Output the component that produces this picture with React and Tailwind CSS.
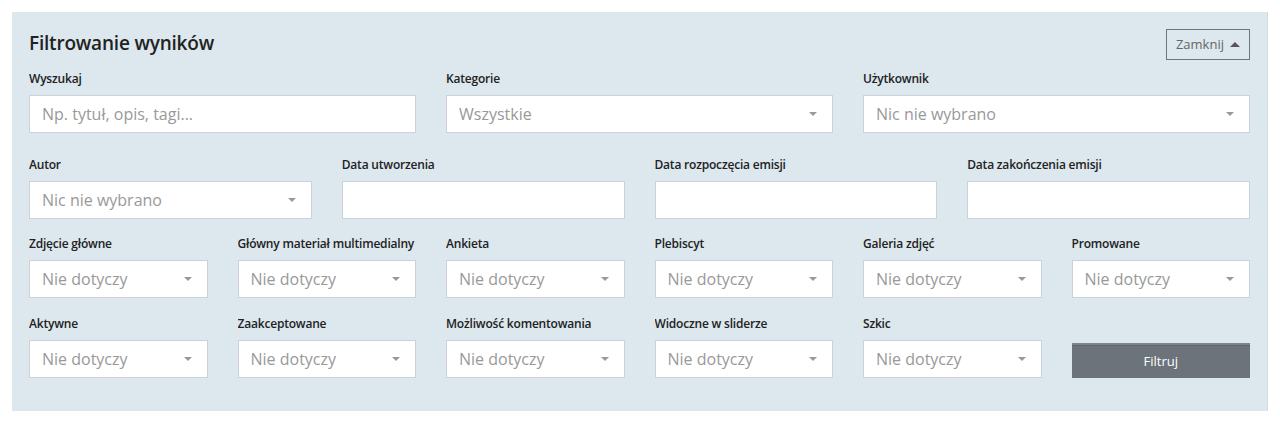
import React from 'react';

const Caret = () => (
  <span className="ml-2 h-0 w-0 shrink-0 border-x-[4px] border-t-[4px] border-x-transparent border-t-[#999]" />
);

const Field = ({ label, children }) => (
  <div className="flex min-w-0 flex-col">
    <label className="mb-[8px] truncate text-[12px] font-semibold leading-[16px] tracking-[-0.2px] text-[#222]">
      {label}
    </label>
    {children}
  </div>
);

const TextInput = ({ placeholder = '' }) => (
  <input
    type="text"
    placeholder={placeholder}
    className="h-[38px] w-full border border-[#ccd2d7] bg-white px-[12px] text-[16px] text-[#555] outline-none placeholder:text-[#999]"
  />
);

const Select = ({ value }) => (
  <button
    type="button"
    className="flex h-[38px] w-full items-center justify-between border border-[#ccd2d7] bg-white pl-[12px] pr-[15px] text-left text-[16px] text-[#999]"
  >
    <span className="truncate">{value}</span>
    <Caret />
  </button>
);

const row3 = ['Zdjęcie główne', 'Główny materiał multimedialny', 'Ankieta', 'Plebiscyt', 'Galeria zdjęć', 'Promowane'];
const row4 = ['Aktywne', 'Zaakceptowane', 'Możliwość komentowania', 'Widoczne w sliderze', 'Szkic'];

export default function App() {
  return (
    <div className="min-h-[424px] bg-white p-[12px] font-['Open_Sans',sans-serif]">
      <section className="border-r border-[#d0dbe2] bg-[#dce7ee] px-[17px] pb-[33px] pt-[17px]">
        <div className="flex items-start justify-between">
          <h2 className="pt-[1px] text-[19px] font-semibold leading-[26px] tracking-[-0.2px] text-[#222]">Filtrowanie wyników</h2>
          <button
            type="button"
            className="flex h-[31px] items-center gap-[6px] border border-[#6b7780] px-[9px] text-[13px] text-[#666]"
          >
            Zamknij
            <span className="h-0 w-0 border-x-[5px] border-b-[5px] border-x-transparent border-b-[#555]" />
          </button>
        </div>

        <div className="mt-[11px] grid grid-cols-3 gap-x-[30px]">
          <Field label="Wyszukaj">
            <TextInput placeholder="Np. tytuł, opis, tagi..." />
          </Field>
          <Field label="Kategorie">
            <Select value="Wszystkie" />
          </Field>
          <Field label="Użytkownik">
            <Select value="Nic nie wybrano" />
          </Field>
        </div>

        <div className="mt-[24px] grid grid-cols-4 gap-x-[30px]">
          <Field label="Autor">
            <Select value="Nic nie wybrano" />
          </Field>
          <Field label="Data utworzenia">
            <TextInput />
          </Field>
          <Field label="Data rozpoczęcia emisji">
            <TextInput />
          </Field>
          <Field label="Data zakończenia emisji">
            <TextInput />
          </Field>
        </div>

        <div className="mt-[17px] grid grid-cols-6 gap-x-[30px]">
          {row3.map((l) => (
            <Field key={l} label={l}>
              <Select value="Nie dotyczy" />
            </Field>
          ))}
        </div>

        <div className="mt-[18px] grid grid-cols-6 gap-x-[30px]">
          {row4.map((l) => (
            <Field key={l} label={l}>
              <Select value="Nie dotyczy" />
            </Field>
          ))}
          <div className="flex items-end">
            <button
              type="button"
              className="h-[35px] w-full border-t-2 border-[#7d848b] bg-[#6c737b] text-[13px] text-white shadow-[inset_0_1px_0_#5f666d]"
            >
              Filtruj
            </button>
          </div>
        </div>
      </section>
    </div>
  );
}
